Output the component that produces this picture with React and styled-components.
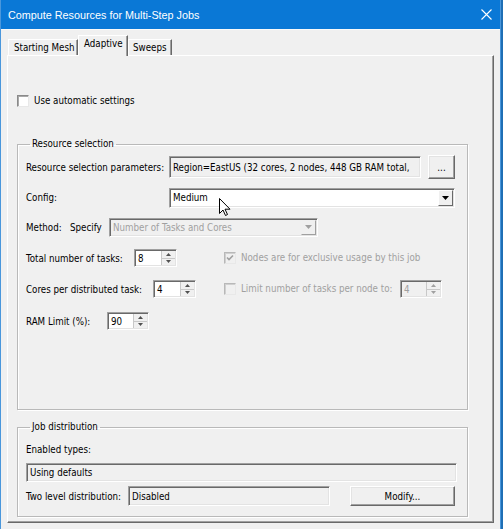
import React from 'react';
import styled, { createGlobalStyle } from 'styled-components';

const Global = createGlobalStyle`
  html, body { margin: 0; padding: 0; background: #1f6fb5; }
  body {
    width: 503px; height: 529px; overflow: hidden;
    font-family: "DejaVu Sans Condensed", "Liberation Sans", Arial, sans-serif;
    font-size: 9.7px; color: #000;
  }
  * { box-sizing: border-box; }
`;

const Stage = styled.div`
  position: relative;
  width: 503px;
  height: 529px;
  display: flex;
`;

const Window = styled.div`
  width: 501px;
  height: 529px;
  background: #f0f0f0;
  border-left: 1px solid #4a97dc;
  border-right: 1px solid #4a97dc;
  display: flex;
  flex-direction: column;
`;

const TitleBar = styled.div`
  height: 29px;
  flex: none;
  background: #0a78d6;
  color: #fff;
  display: flex;
  align-items: center;
  justify-content: space-between;
  padding: 0 8px 0 7px;
  font-family: "Liberation Sans", Arial, sans-serif;
  font-size: 10.8px;
`;

const Body = styled.div`
  flex: 1;
  display: flex;
  flex-direction: column;
  padding: 5px 6px 6px 6px;
  border-top: 1px solid #fafafa;
`;

const TabStrip = styled.div`
  display: flex;
  align-items: flex-end;
  height: 20px;
  padding-left: 1px;
  flex: none;
`;

const Tab = styled.div`
  position: relative;
  z-index: ${p => (p.$active ? 2 : 0)};
  width: ${p => p.$w}px;
  height: ${p => (p.$active ? 21 : 16)}px;
  margin-bottom: ${p => (p.$active ? -1 : 0)}px;
  background: #f0f0f0;
  border-top: 1px solid #fff;
  border-left: 1px solid #fff;
  border-right: 1px solid #696969;
  box-shadow: inset -1px 0 0 #a0a0a0;
  display: flex;
  align-items: ${p => (p.$active ? 'flex-start' : 'center')};
  padding: ${p => (p.$active ? '2px' : '0')} 0 0 ${p => p.$pl}px;
  white-space: nowrap;
`;

const Panel = styled.div`
  flex: 1;
  border: 1px solid;
  border-color: #fff #696969 #696969 #fff;
  box-shadow: inset -1px -1px 0 #a0a0a0;
  padding: 0 25px 0 9px;
  display: flex;
  flex-direction: column;
`;

const CheckRow = styled.label`
  display: flex;
  align-items: center;
  gap: 5px;
  height: 12px;
  line-height: 12px;
  margin-top: ${p => p.$mt || 0}px;
  color: ${p => (p.$disabled ? '#a0a0a0' : '#000')};
  white-space: nowrap;
`;

const Box = styled.span`
  width: 12px;
  height: 12px;
  flex: none;
  background: ${p => (p.$disabled ? '#f0f0f0' : '#fff')};
  border: 1px solid;
  border-color: ${p => (p.$disabled ? '#b8b8b8 #e8e8e8 #e8e8e8 #b8b8b8' : '#8a8a8a #e8e8e8 #e8e8e8 #8a8a8a')};
  box-shadow: inset 1px 1px 0 ${p => (p.$disabled ? '#d0d0d0' : '#a8a8a8')};
  display: flex;
  align-items: center;
  justify-content: center;
`;

const Group = styled.fieldset`
  margin: ${p => p.$mt}px 0 0 0;
  height: ${p => p.$h}px;
  border: 1px solid #b9b9b9;
  box-shadow: 1px 1px 0 #fff, inset 1px 1px 0 #fff;
  padding: ${p => p.$pt}px 10px 0 8px;
  display: flex;
  flex-direction: column;
  gap: ${p => p.$gap}px;
  min-width: 0;
`;

const Legend = styled.legend`
  padding: 0 2px;
  margin-left: 4px;
  line-height: 12px;
  height: 12px;
`;

const Row = styled.div`
  display: flex;
  align-items: center;
  height: ${p => p.$h || 22}px;
  gap: ${p => p.$gap || 0}px;
  margin-top: ${p => p.$mt || 0}px;
`;

const Label = styled.span`
  width: ${p => (p.$w ? `${p.$w}px` : 'auto')};
  flex: none;
  white-space: nowrap;
  color: ${p => (p.$disabled ? '#a0a0a0' : '#000')};
`;

const Cell = styled.div`
  width: ${p => p.$w}px;
  flex: none;
  display: flex;
  align-items: center;
`;

const TextBox = styled.div`
  width: ${p => (p.$w ? `${p.$w}px` : 'auto')};
  flex: ${p => (p.$w ? 'none' : '1')};
  height: ${p => p.$h}px;
  background: ${p => (p.$white ? '#fff' : '#f0f0f0')};
  border: 1px solid;
  border-color: #a0a0a0 #fff #fff #a0a0a0;
  box-shadow: inset 1px 1px 0 #696969, inset -1px -1px 0 #e3e3e3;
  display: flex;
  align-items: center;
  padding-left: 3px;
  white-space: nowrap;
  overflow: hidden;
  color: ${p => (p.$disabled ? '#a0a0a0' : '#000')};
`;

const Button = styled.div`
  width: ${p => p.$w}px;
  height: ${p => p.$h}px;
  flex: none;
  margin-left: ${p => p.$ml || 0}px;
  background: #f0f0f0;
  border: 1px solid;
  border-color: #fff #696969 #696969 #fff;
  box-shadow: inset -1px -1px 0 #a0a0a0, inset 1px 1px 0 #e3e3e3;
  display: flex;
  align-items: center;
  justify-content: center;
  white-space: nowrap;
`;

const Combo = styled(TextBox)`
  padding-right: 1px;
  justify-content: space-between;
`;

const DropButton = styled.span`
  width: 15px;
  height: ${p => p.$h}px;
  flex: none;
  background: #f0f0f0;
  border: 1px solid;
  border-color: ${p => (p.$disabled ? '#f0f0f0 #a0a0a0 #a0a0a0 #f0f0f0' : '#fff #696969 #696969 #fff')};
  display: flex;
  align-items: center;
  justify-content: center;
`;

const Spin = styled.div`
  width: ${p => p.$w}px;
  height: 18px;
  flex: none;
  background: ${p => (p.$disabled ? '#f0f0f0' : '#fff')};
  border: 1px solid;
  border-color: #a0a0a0 #fff #fff #a0a0a0;
  box-shadow: inset 1px 1px 0 #696969, inset -1px -1px 0 #e3e3e3;
  display: flex;
  align-items: stretch;
  padding: 1px 1px 1px 3px;
  color: ${p => (p.$disabled ? '#a0a0a0' : '#000')};
`;

const SpinValue = styled.span`
  flex: 1;
  display: flex;
  align-items: center;
`;

const SpinButtons = styled.span`
  width: 14px;
  flex: none;
  display: flex;
  flex-direction: column;
  border-left: 1px solid #c8c8c8;
  background: #f0f0f0;
`;

const SpinHalf = styled.span`
  flex: 1;
  display: flex;
  align-items: center;
  justify-content: center;
  border-bottom: ${p => (p.$top ? '1px solid #c8c8c8' : 'none')};
`;

const Cursor = styled.svg`
  position: absolute;
  left: 219px;
  top: 198px;
`;

const Arrow = ({ up, color = '#505050' }) => (
  <svg width="5" height="3" viewBox="0 0 5 3">
    <path d={up ? 'M2.5 0 L5 3 L0 3 Z' : 'M0 0 L5 0 L2.5 3 Z'} fill={color} />
  </svg>
);

const Spinner = ({ w = 43, value, disabled }) => (
  <Spin $w={w} $disabled={disabled}>
    <SpinValue>{value}</SpinValue>
    <SpinButtons>
      <SpinHalf $top>
        <Arrow up color={disabled ? '#a0a0a0' : '#505050'} />
      </SpinHalf>
      <SpinHalf>
        <Arrow color={disabled ? '#a0a0a0' : '#505050'} />
      </SpinHalf>
    </SpinButtons>
  </Spin>
);

const Check = ({ checked, disabled }) => (
  <Box $disabled={disabled}>
    {checked && (
      <svg width="8" height="8" viewBox="0 0 8 8">
        <path d="M1 3.5 L3 5.5 L7 1.5" stroke={disabled ? '#a0a0a0' : '#000'} strokeWidth="1.6" fill="none" />
      </svg>
    )}
  </Box>
);

export default function App() {
  return (
    <>
      <Global />
      <Stage>
        <Window>
          <TitleBar>
            <span>Compute Resources for Multi-Step Jobs</span>
            <svg width="11" height="11" viewBox="0 0 11 11">
              <path d="M0.5 0.5 L10.5 10.5 M10.5 0.5 L0.5 10.5" stroke="#fff" strokeWidth="1.1" />
            </svg>
          </TitleBar>
          <Body>
            <TabStrip>
              <Tab $w={70} $pl={5}>Starting Mesh</Tab>
              <Tab $w={50} $pl={5} $active>Adaptive</Tab>
              <Tab $w={44} $pl={4}>Sweeps</Tab>
            </TabStrip>
            <Panel>
              <CheckRow $mt={39}>
                <Check />
                Use automatic settings
              </CheckRow>

              <Group $mt={31} $h={272} $pt={5} $gap={9}>
                <Legend>Resource selection</Legend>
                <Row $h={24}>
                  <Label $w={143}>Resource selection parameters:</Label>
                  <TextBox $w={252} $h={22}>Region=EastUS (32 cores, 2 nodes, 448 GB RAM total,</TextBox>
                  <Button $w={27} $h={24} $ml={7}>...</Button>
                </Row>
                <Row $h={19}>
                  <Label $w={143}>Config:</Label>
                  <Combo $w={286} $h={20} $white>
                    Medium
                    <DropButton $h={16}>
                      <svg width="7" height="4" viewBox="0 0 7 4"><path d="M0 0 L7 0 L3.5 4 Z" fill="#000" /></svg>
                    </DropButton>
                  </Combo>
                </Row>
                <Row $h={22}>
                  <Label $w={44}>Method:</Label>
                  <Label $w={39}>Specify</Label>
                  <Combo $w={209} $h={19} $disabled>
                    Number of Tasks and Cores
                    <DropButton $h={15} $disabled>
                      <svg width="7" height="4" viewBox="0 0 7 4"><path d="M0 0 L7 0 L3.5 4 Z" fill="#a0a0a0" /></svg>
                    </DropButton>
                  </Combo>
                </Row>
                <Row $h={22}>
                  <Cell $w={198}>
                    <Label $w={108}>Total number of tasks:</Label>
                    <Spinner value="8" />
                  </Cell>
                  <CheckRow $disabled>
                    <Check checked disabled />
                    Nodes are for exclusive usage by this job
                  </CheckRow>
                </Row>
                <Row $h={22}>
                  <Cell $w={198}>
                    <Label $w={127}>Cores per distributed task:</Label>
                    <Spinner value="4" />
                  </Cell>
                  <Cell $w={176}>
                    <CheckRow $disabled>
                      <Check disabled />
                      Limit number of tasks per node to:
                    </CheckRow>
                  </Cell>
                  <Spinner w={42} value="4" disabled />
                </Row>
                <Row $h={24}>
                  <Label $w={81}>RAM Limit (%):</Label>
                  <Spinner w={42} value="90" />
                </Row>
              </Group>

              <Group $mt={11} $h={96} $pt={10} $gap={0}>
                <Legend>Job distribution</Legend>
                <Row $h={12}>
                  <Label>Enabled types:</Label>
                </Row>
                <Row $h={19} $mt={8}>
                  <TextBox $h={19}>Using defaults</TextBox>
                </Row>
                <Row $h={20} $mt={4}>
                  <Label $w={102}>Two level distribution:</Label>
                  <TextBox $w={202} $h={20}>Disabled</TextBox>
                  <Button $w={105} $h={20} $ml={20}>Modify...</Button>
                </Row>
              </Group>
            </Panel>
          </Body>
        </Window>
        <Cursor width="12" height="19" viewBox="0 0 12 19">
          <path d="M0.5 0.5 L0.5 15.5 L4 12 L6.5 17.5 L8.5 16.5 L6 11.2 L11 11.2 Z" fill="#fff" stroke="#000" strokeWidth="1" />
        </Cursor>
      </Stage>
    </>
  );
}
